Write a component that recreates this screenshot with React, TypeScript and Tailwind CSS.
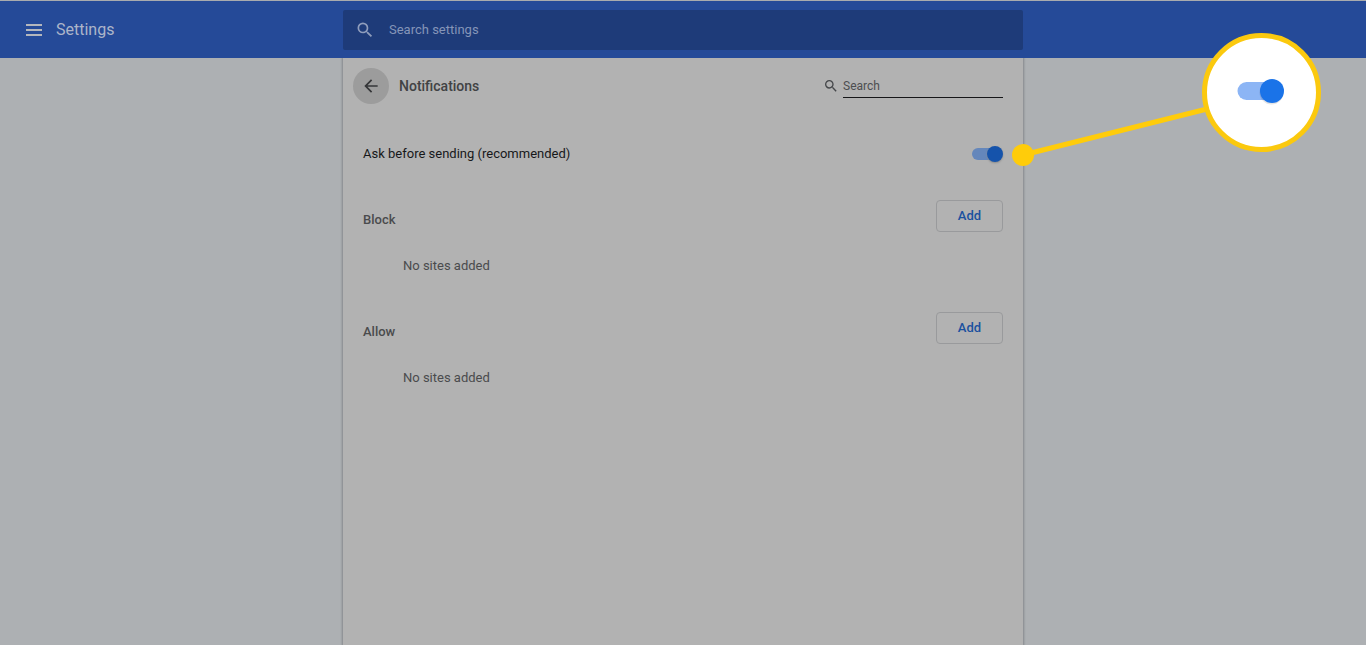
import React, { useState } from "react";

const SearchIcon = ({ className }: { className: string }) => (
  <svg viewBox="0 0 24 24" fill="currentColor" className={className} aria-hidden="true">
    <path d="M15.5 14h-.79l-.28-.27A6.471 6.471 0 0 0 16 9.5 6.5 6.5 0 1 0 9.5 16c1.61 0 3.09-.59 4.23-1.57l.27.28v.79l5 4.99L20.49 19l-4.99-5zm-6 0C7.01 14 5 11.99 5 9.5S7.01 5 9.5 5 14 7.01 14 9.5 11.99 14 9.5 14z" />
  </svg>
);

const Header = () => (
  <header className="relative z-10 flex h-[58px] items-center border-t border-[#a9abae] bg-[#254a98] pt-px">
    <div className="flex-1">
      <div className="flex items-center pl-[22px]">
        <button type="button" aria-label="Main menu" className="text-[#b4b7bd]">
          <svg viewBox="0 0 24 24" fill="currentColor" className="size-6">
            <path d="M4 18h16v-2H4v2zm0-5h16v-2H4v2zm0-7v2h16V6H4z" />
          </svg>
        </button>
        <h1 className="ml-2.5 text-base text-[#acb5c9]">Settings</h1>
      </div>
    </div>
    <label className="flex h-10 w-full max-w-[680px] items-center rounded-xs bg-[#1e3b79] pl-3">
      <SearchIcon className="size-5 text-[#8f9dbc]" />
      <input
        type="text"
        aria-label="Search settings"
        placeholder="Search settings"
        className="ml-3.5 flex-1 bg-transparent text-[13px] text-[#b4b7bd] outline-none placeholder:text-[#8595b8]"
      />
    </label>
    <div className="flex-1" />
  </header>
);

// Enlarged view of the switch, joined to it by a line
const Callout = () => (
  <svg
    width="320"
    height="140"
    viewBox="0 0 320 140"
    className="pointer-events-none absolute -top-7 left-full z-20 -ml-3"
    aria-hidden="true"
  >
    <path d="M12 125 L196 79" stroke="#ffcc0a" strokeWidth="5" />
    <circle cx="12" cy="125" r="11" fill="#ffcc0a" />
    <circle cx="250.5" cy="62.5" r="57" fill="#fff" stroke="#fbc90e" strokeWidth="5" />
    <rect x="226.5" y="52" width="44" height="18" rx="9" fill="#8cb5f5" />
    <circle cx="260.5" cy="62.5" r="12" fill="#000" opacity="0.1" />
    <circle cx="261" cy="61" r="12" fill="#1a73e8" />
  </svg>
);

const SiteSection = ({ title }: { title: string }) => (
  <section className="h-28 pt-4 text-[13px] leading-5 text-[#4a4b4d]">
    <div className="flex items-start justify-between px-5">
      <h3 className="mt-2.5 font-medium">{title}</h3>
      <button
        type="button"
        className="h-8 w-[67px] rounded-sm border border-[#999a9c] font-medium text-[#1b519f]"
      >
        Add
      </button>
    </div>
    <p className="mt-6 px-[60px]">No sites added</p>
  </section>
);

export default function App() {
  const [ask, setAsk] = useState(true);

  return (
    <div className="flex min-h-screen flex-col overflow-x-hidden bg-[#adb0b3] font-[Roboto,sans-serif]">
      <Header />
      <div className="relative mx-auto flex w-full max-w-[680px] flex-1 flex-col">
        <main className="flex-1 bg-[#b2b2b2] shadow-[0_0_2px_1px_#85888b]">
          <div className="flex h-14 items-center pr-5 pl-2.5">
            <button
              type="button"
              aria-label="Back"
              className="flex size-9 items-center justify-center rounded-full bg-[#9c9c9c] text-[#353638]"
            >
              <svg viewBox="0 0 24 24" fill="currentColor" className="size-5">
                <path d="M20 11H7.83l5.59-5.59L12 4l-8 8 8 8 1.41-1.41L7.83 13H20v-2z" />
              </svg>
            </button>
            <h2 className="ml-2.5 flex-1 text-sm font-medium text-[#414244]">Notifications</h2>
            <label className="flex items-center">
              <SearchIcon className="mr-1 size-4 text-[#45474a]" />
              <input
                type="text"
                aria-label="Search"
                placeholder="Search"
                className="h-6 w-40 border-b border-[#161719] bg-transparent text-xs text-[#252628] outline-none placeholder:text-[#4d4e50]"
              />
            </label>
          </div>

          <div className="mt-4 flex h-12 items-center justify-between px-5">
            <label htmlFor="ask" className="text-[13px] text-[#17181a]">
              Ask before sending (recommended)
            </label>
            <input
              id="ask"
              type="checkbox"
              role="switch"
              checked={ask}
              onChange={(e) => setAsk(e.target.checked)}
              className="relative h-4 w-8 appearance-none before:absolute before:top-0.5 before:left-px before:h-3 before:w-7 before:rounded-full before:bg-[#6587bb] after:absolute after:top-0 after:left-0 after:size-4 after:rounded-full after:bg-[#1553ab] after:shadow-[0_1px_2px_#8a8a8a] checked:after:left-4"
            />
          </div>

          <div className="mt-1.5">
            <SiteSection title="Block" />
            <SiteSection title="Allow" />
          </div>
        </main>
        <Callout />
      </div>
    </div>
  );
}
